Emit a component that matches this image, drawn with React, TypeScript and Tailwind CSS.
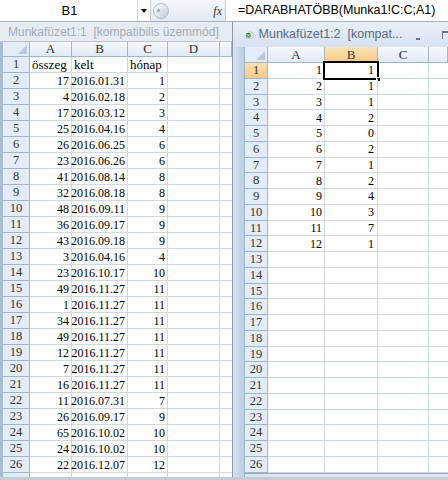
import React from "react";

const serif = "[font-family:'Liberation_Serif','Times_New_Roman',serif]";
const sans = "[font-family:'Liberation_Sans',Arial,sans-serif]";

const leftData: [string, string, string][] = [
  ["összeg", "kelt", "hónap"],
  ["17", "2016.01.31", "1"],
  ["4", "2016.02.18", "2"],
  ["17", "2016.03.12", "3"],
  ["25", "2016.04.16", "4"],
  ["26", "2016.06.25", "6"],
  ["23", "2016.06.26", "6"],
  ["41", "2016.08.14", "8"],
  ["32", "2016.08.18", "8"],
  ["48", "2016.09.11", "9"],
  ["36", "2016.09.17", "9"],
  ["43", "2016.09.18", "9"],
  ["3", "2016.04.16", "4"],
  ["23", "2016.10.17", "10"],
  ["49", "2016.11.27", "11"],
  ["1", "2016.11.27", "11"],
  ["34", "2016.11.27", "11"],
  ["49", "2016.11.27", "11"],
  ["12", "2016.11.27", "11"],
  ["7", "2016.11.27", "11"],
  ["16", "2016.11.27", "11"],
  ["11", "2016.07.31", "7"],
  ["26", "2016.09.17", "9"],
  ["65", "2016.10.02", "10"],
  ["24", "2016.10.02", "10"],
  ["22", "2016.12.07", "12"],
];

const rightData: [string, string][] = [
  ["1", "1"], ["2", "1"], ["3", "1"], ["4", "2"], ["5", "0"], ["6", "2"],
  ["7", "1"], ["8", "2"], ["9", "4"], ["10", "3"], ["11", "7"], ["12", "1"],
];

function Corner({ w }: { w: string }) {
  return (
    <div className={`${w} shrink-0 h-full relative bg-[#e4ecf7] border-r border-b border-[#9eb6ce]`}>
      <div className="absolute right-[2px] bottom-[2px] w-0 h-0 border-l-[9px] border-l-transparent border-b-[9px] border-b-[#b7c9df]" />
    </div>
  );
}

function ColHead({ w, label, sel }: { w: string; label: string; sel?: boolean }) {
  return (
    <div
      className={`${w} shrink-0 h-full flex items-center justify-center border-r border-b border-[#9eb6ce] ${serif} text-[13px] ${
        sel ? "bg-gradient-to-b from-[#fbe4bb] to-[#f8c982] text-[#3b3b3b]" : "bg-gradient-to-b from-[#f6f9fc] to-[#e2eaf5] text-[#333]"
      }`}
    >
      {label}
    </div>
  );
}

function FormulaBar() {
  return (
    <div className={`h-[22px] flex bg-white border-b border-[#a7b1bf] ${sans}`}>
      <div className="w-[138px] shrink-0 flex items-center justify-center text-[13px] text-black border-r border-[#d6dbe3] pl-[2px]">
        B1
      </div>
      <div className="w-[12px] shrink-0 flex items-center justify-center">
        <div className="w-0 h-0 border-l-[3px] border-l-transparent border-r-[3px] border-r-transparent border-t-[4px] border-t-black" />
      </div>
      <div className="w-[76px] shrink-0 flex items-center bg-gradient-to-b from-[#f4f7fb] to-[#e3e9f2] border-x border-[#c5cdd8]">
        <div className="ml-[2px] w-[16px] h-[16px] rounded-full bg-gradient-to-br from-[#ffffff] to-[#c3ccd8] border border-[#b0bac8] flex items-center justify-start">
          <div className="ml-[3px] w-[3px] h-[3px] rounded-full bg-[#9aa6b6]" />
        </div>
        <span className={`ml-auto mr-[3px] italic text-[12px] text-[#333] ${serif}`}>fx</span>
      </div>
      <div className="flex-1 flex items-center pl-[12px] text-[12.5px] text-black whitespace-nowrap overflow-hidden">
        =DARABHATÖBB(Munka1!C:C;A1)
      </div>
    </div>
  );
}

function LeftWindow() {
  return (
    <div className="w-[233px] shrink-0 h-full flex flex-col overflow-hidden bg-[#e7ecf2] border-r border-[#8d98a8]">
      <div className={`h-[20px] shrink-0 flex items-center pl-[8px] text-[12px] text-[#a4adb9] whitespace-nowrap ${sans} border-b border-[#b9c4d2]`}>
        Munkafüzet1:1&nbsp;&nbsp;[kompatibilis üzemmód]
      </div>
      <div className="flex flex-1 min-h-0">
        <div className="w-[3px] shrink-0 bg-[#a9bdd7]" />
        <div className="flex-1 flex flex-col bg-white overflow-hidden">
          <div className="h-[15px] shrink-0 flex">
            <Corner w="w-[27px]" />
            <ColHead w="w-[42px]" label="A" />
            <ColHead w="w-[56px]" label="B" />
            <ColHead w="w-[40px]" label="C" />
            <ColHead w="w-[52px]" label="D" />
            <ColHead w="flex-1" label="" />
          </div>
          {leftData.map((r, i) => (
            <div key={i} className={`h-[16px] shrink-0 flex ${serif}`}>
              <div className="w-[27px] shrink-0 flex items-center justify-center bg-[#e4ecf7] border-r border-b border-[#9eb6ce] text-[12.5px] text-[#333]">
                {i + 1}
              </div>
              {i === 0 ? (
                <>
                  <div className="w-[42px] shrink-0 flex items-center pl-[2px] border-r border-b border-[#d0d7e5] text-[13px] text-black">{r[0]}</div>
                  <div className="w-[56px] shrink-0 flex items-center pl-[2px] border-r border-b border-[#d0d7e5] text-[13px] text-black">{r[1]}</div>
                  <div className="w-[40px] shrink-0 flex items-center pl-[2px] border-r border-b border-[#d0d7e5] text-[13px] text-black whitespace-nowrap overflow-visible">{r[2]}</div>
                </>
              ) : (
                <>
                  <div className="w-[42px] shrink-0 flex items-center justify-end pr-[2px] border-r border-b border-[#d0d7e5] text-[12px] text-black">{r[0]}</div>
                  <div className="w-[56px] shrink-0 flex items-center justify-end pr-[2px] border-r border-b border-[#d0d7e5] text-[12px] text-black">{r[1]}</div>
                  <div className="w-[40px] shrink-0 flex items-center justify-end pr-[2px] border-r border-b border-[#d0d7e5] text-[12px] text-black">{r[2]}</div>
                </>
              )}
              <div className="w-[52px] shrink-0 border-r border-b border-[#d0d7e5]" />
              <div className="flex-1 border-b border-[#d0d7e5]" />
            </div>
          ))}
          <div className="h-[16px] shrink-0 flex">
            <div className="w-[27px] shrink-0 bg-[#e4ecf7] border-r border-[#9eb6ce]" />
            <div className="w-[42px] shrink-0 border-r border-[#d0d7e5]" />
            <div className="w-[56px] shrink-0 border-r border-[#d0d7e5]" />
            <div className="w-[40px] shrink-0 border-r border-[#d0d7e5]" />
            <div className="w-[52px] shrink-0 border-r border-[#d0d7e5]" />
          </div>
        </div>
      </div>
    </div>
  );
}

function ExcelIcon() {
  return (
    <svg width="14" height="14" viewBox="0 0 14 14">
      <path d="M5 1.5h5.5l2.5 2.5v8.5H5z" fill="#fff" stroke="#8a96a6" strokeWidth="0.8" />
      <path d="M10.5 1.5v2.5H13" fill="none" stroke="#8a96a6" strokeWidth="0.8" />
      <rect x="6.5" y="6" width="5" height="1" fill="#9fc39b" />
      <rect x="6.5" y="8.5" width="5" height="1" fill="#9fc39b" />
      <rect x="0.5" y="3.5" width="8" height="8" rx="1" fill="#2f8a3a" />
      <path d="M2.3 5.3l4.4 4.4M6.7 5.3l-4.4 4.4" stroke="#fff" strokeWidth="1.4" />
    </svg>
  );
}

function RightWindow() {
  return (
    <div className="flex-1 h-full flex flex-col overflow-hidden bg-gradient-to-b from-[#e3ecf7] to-[#d5e2f2]">
      <div className={`h-[25px] shrink-0 flex items-center pl-[13px] ${sans} bg-gradient-to-b from-[#e9f0f9] to-[#d6e2f1]`}>
        <ExcelIcon />
        <span className="ml-[5px] text-[12.5px] text-[#5d6b80] whitespace-nowrap">Munkafüzet1:2&nbsp;&nbsp;[kompat...</span>
        <div className="ml-[14px] mt-[8px] w-[7px] h-[2px] bg-[#6b7688]" />
        <div className="ml-[22px] w-[10px] h-[8px] border-t-[2px] border-l border-[#6b7688]" />
      </div>
      <div className="flex flex-1 min-h-0">
        <div className="w-[11px] shrink-0 bg-gradient-to-r from-[#d7e2f0] to-[#bccde5]" />
        <div className="flex-1 flex flex-col bg-white overflow-hidden border-l border-[#9eb6ce]">
          <div className="h-[16px] shrink-0 flex">
            <Corner w="w-[23px]" />
            <ColHead w="w-[57px]" label="A" />
            <ColHead w="w-[53px]" label="B" sel />
            <ColHead w="w-[51px]" label="C" />
            <ColHead w="flex-1" label="" />
          </div>
          {Array.from({ length: 26 }).map((_, i) => {
            const r = rightData[i];
            const selRow = i === 0;
            return (
              <div key={i} className={`h-[15.75px] shrink-0 flex ${serif}`}>
                <div
                  className={`w-[23px] shrink-0 flex items-center justify-center border-r border-b border-[#9eb6ce] text-[12.5px] text-[#333] ${
                    selRow ? "bg-gradient-to-b from-[#fbe0b0] to-[#f8ca86]" : "bg-[#e4ecf7]"
                  }`}
                >
                  {i + 1}
                </div>
                <div className="w-[57px] shrink-0 flex items-center justify-end pr-[2px] border-r border-b border-[#d0d7e5] text-[12px] text-black">
                  {r ? r[0] : ""}
                </div>
                <div className="w-[53px] shrink-0 relative flex items-center justify-end pr-[3px] border-r border-b border-[#d0d7e5] text-[12px] text-black">
                  {r ? r[1] : ""}
                  {selRow && (
                    <>
                      <div className="absolute left-[-2px] top-[-2px] right-[-2px] bottom-[-2px] border-2 border-black" />
                      <div className="absolute right-[-4px] bottom-[-4px] w-[5px] h-[5px] bg-black border border-white" />
                    </>
                  )}
                </div>
                <div className="w-[51px] shrink-0 border-r border-b border-[#d0d7e5]" />
                <div className="flex-1 border-b border-[#d0d7e5]" />
              </div>
            );
          })}
          <div className="flex-1 flex border-t border-[#a0aab8] bg-[#dde5ef]" />
        </div>
      </div>
    </div>
  );
}

export default function App() {
  return (
    <div className="w-[448px] h-[480px] overflow-hidden flex flex-col bg-[#dfe6ee]">
      <FormulaBar />
      <div className="flex flex-1 min-h-0 border-b-[3px] border-[#c4ccd6]">
        <LeftWindow />
        <RightWindow />
      </div>
    </div>
  );
}
